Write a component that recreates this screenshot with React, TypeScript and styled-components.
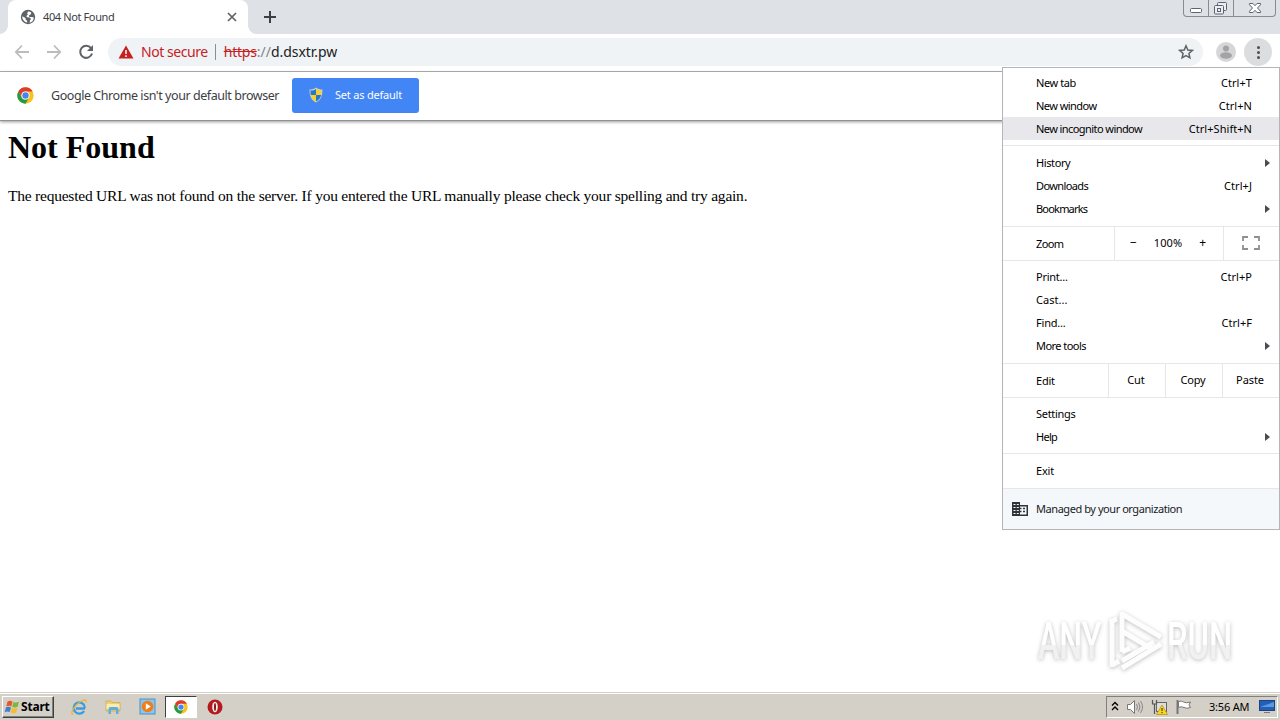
import React from "react";
import styled, { createGlobalStyle } from "styled-components";

const GlobalStyle = createGlobalStyle`
    * {
        box-sizing: border-box;
    }
    body {
        margin: 0;
        background: #fff;
        overflow: hidden;
    }
`

const Screen = styled.div`
    position: relative;
    display: flex;
    flex-direction: column;
    width: 1280px;
    height: 720px;
    overflow: hidden;
    background: #fff;
    font-family: "Noto Sans", "Open Sans", sans-serif;
    font-size: 11px;
    color: #000;
    white-space: nowrap;
`

/* text whose advance is tightened or widened */
const Label = styled.span<{ $gap?: number; $size?: number; $color?: string }>`
    font-size: ${(p) => p.$size ?? 11}px;
    letter-spacing: ${(p) => p.$gap ?? 0}px;
    color: ${(p) => p.$color ?? "inherit"};
`

const TabStrip = styled.div`
    display: flex;
    align-items: flex-start;
    height: 34px;
    flex: none;
    padding-left: 8px;
    background: #dee1e6;
`

const Tab = styled.div`
    position: relative;
    display: flex;
    align-items: center;
    width: 240px;
    height: 34px;
    padding: 0 10px 0 12px;
    background: #fff;
    border-radius: 8px 8px 0 0;
    color: #3c4043;

    /* flared feet of the tab */
    &::before,
    &::after {
        content: "";
        position: absolute;
        bottom: 0;
        width: 8px;
        height: 8px;
    }
    &::before {
        left: -8px;
        background: radial-gradient(circle at 0 0, #dee1e6 7.5px, #fff 8px);
    }
    &::after {
        right: -8px;
        background: radial-gradient(circle at 100% 0, #dee1e6 7.5px, #fff 8px);
    }

    svg {
        flex: none;
    }
    span {
        flex: 1;
        margin-left: 7px;
        padding-bottom: 2px;
    }
`

const NewTab = styled.div`
    padding: 10px 0 0 15px;
    line-height: 0;
`

const WindowButtons = styled.div`
    display: flex;
    width: 93px;
    height: 17px;
    margin-left: auto;
    margin-right: 4px;
    border: 1px solid #868b95;
    border-top: 0;
    border-radius: 0 0 4px 4px;
`

const WindowButton = styled.div<{ $width: number }>`
    display: flex;
    justify-content: center;
    width: ${(p) => p.$width}px;
    border-right: 1px solid #868b95;

    &:last-child {
        border-right: 0;
    }
`

const Toolbar = styled.div`
    display: flex;
    align-items: center;
    height: 38px;
    flex: none;
    padding: 0 8px 1px 14px;
    border-bottom: 1px solid #b0b2b5;
`

const NavIcons = styled.div`
    display: flex;
    gap: 16px;
    width: 94px;
`

const AddressBar = styled.div`
    display: flex;
    align-items: center;
    width: 1095px;
    height: 28px;
    padding: 0 9px 0 10px;
    border-radius: 14px;
    background: #f0f3f5;
    color: #202124;

    > span {
        padding-bottom: 1px;
    }
`

const SecurityText = styled(Label)`
    margin-left: 7px;
`

const Divider = styled.i`
    width: 1px;
    height: 16px;
    margin: 0 8px 0 7px;
    background: #8b8e92;
`

const Struck = styled(Label)`
    text-decoration: line-through;
`

const StarSlot = styled.div`
    margin-left: auto;
    line-height: 0;
`

const Avatar = styled.svg`
    margin-left: 13px;
`

const MenuButton = styled.div`
    display: flex;
    flex-direction: column;
    align-items: center;
    justify-content: center;
    gap: 2px;
    width: 28px;
    height: 28px;
    margin-left: 8px;
    border-radius: 50%;
    background: #dcdddf;

    i {
        width: 3px;
        height: 3px;
        border-radius: 50%;
        background: #4c4f53;
    }
`

const InfoBar = styled.div`
    display: flex;
    align-items: center;
    height: 49px;
    flex: none;
    padding: 0 0 2px 17px;
    border-bottom: 1px solid #909294;
    box-shadow: 0 1px 3px rgba(0, 0, 0, 0.4);
    color: #3c4043;

    > span {
        flex: none;
        width: 241px;
        margin-left: 17px;
    }
`

const DefaultButton = styled.div`
    display: flex;
    align-items: center;
    width: 127px;
    height: 35px;
    padding-left: 17px;
    gap: 12px;
    border-radius: 3px;
    background: #4285f4;
    color: #fff;

    span {
        padding-bottom: 1px;
    }
`

const Page = styled.main`
    flex: 1;
    padding: 8px;
    font-family: "Liberation Serif", "Times New Roman", serif;

    h1 {
        margin: 0;
        font-size: 32px;
        line-height: 36px;
        letter-spacing: 0;
    }
    p {
        margin: 22px 0 0;
        font-size: 15.5px;
        line-height: 18px;
        letter-spacing: -0.225px;
    }
`

const Menu = styled.div`
    position: absolute;
    top: 67px;
    left: 1002px;
    width: 278px;
    height: 463px;
    border: 1px solid #b4b5b7;
    background: #fff;
`

const Section = styled.div<{ $height: number; $top?: number }>`
    height: ${(p) => p.$height}px;
    padding-top: ${(p) => p.$top ?? 5}px;
    border-bottom: 1px solid #e6e7e9;
`

const Row = styled.div<{ $active?: boolean }>`
    display: flex;
    align-items: center;
    height: 23px;
    padding: 0 27px 0 33px;
    background: ${(p) => (p.$active ? "#e8e8ec" : "transparent")};

    span + span {
        margin-left: auto;
    }
`

const Arrow = styled.i`
    margin: 0 -18px 0 auto;
    border: 4px solid transparent;
    border-left: 5px solid #4a4c50;
    border-right: 0;
`

const SplitRow = styled.div`
    display: flex;
    height: 34px;
    border-bottom: 1px solid #e6e7e9;
`

const Cell = styled.div<{ $width: number }>`
    display: flex;
    align-items: center;
    justify-content: center;
    gap: 17px;
    width: ${(p) => p.$width}px;
    padding: 0 2px 2px 0;
    border-left: 1px solid #e6e7e9;

    &:first-child {
        justify-content: flex-start;
        padding: 0 0 0 33px;
        border-left: 0;
    }
`

const Managed = styled.div`
    display: flex;
    align-items: center;
    gap: 8px;
    height: 40px;
    padding-left: 9px;
    background: #f5f8fb;
    color: #202124;

    span {
        padding-bottom: 1px;
    }
`

const Watermark = styled.svg`
    position: absolute;
    left: 1030px;
    top: 604px;
    filter: drop-shadow(0 1px 2px rgba(0, 0, 0, 0.26));
`

const Taskbar = styled.div`
    display: flex;
    align-items: center;
    height: 28px;
    flex: none;
    padding: 1px 2px 1px 2px;
    border-top: 1px solid #d4d0c8;
    background: #d4d0c8;
    box-shadow: inset 0 1px 0 #fff;
`

const StartButton = styled.div`
    display: flex;
    align-items: center;
    width: 52px;
    height: 22px;
    padding-left: 1px;
    border: 1px solid;
    border-color: #fff #404040 #404040 #fff;
    box-shadow: inset -1px -1px 0 #808080;
    font-weight: 700;
`

const Task = styled.div<{ $width: number; $indent?: number; $pressed?: boolean }>`
    display: flex;
    align-items: center;
    justify-content: center;
    width: ${(p) => p.$width}px;
    height: 22px;
    padding-left: ${(p) => p.$indent ?? 0}px;
    border: 1px solid;
    border-color: ${(p) => (p.$pressed ? "#404040 #fff #fff #404040" : "transparent")};
    background: ${(p) => (p.$pressed ? "#fff" : "transparent")};

    svg {
        flex: none;
    }
`

const Tray = styled.div`
    display: flex;
    align-items: center;
    width: 172px;
    height: 22px;
    margin-left: auto;
    padding-left: 4px;
    border: 1px solid;
    border-color: #808080 #fff #fff #808080;

    svg {
        flex: none;
    }
    svg + svg {
        margin-left: 7px;
    }
    span {
        width: 50px;
        margin-left: 17px;
    }
`

const ChromeIcon = ({ size }: { size: number }) => (
    <svg width={size} height={size} viewBox="0 0 48 48">
        <circle cx="24" cy="24" r="23" fill="#fbc116" />
        <path d="M4 12.500A23 23 0 0 1 44 12.500H24A11.500 11.500 0 0 0 14 30z" fill="#df3a30" />
        <path d="M4 12.500A23 23 0 0 0 24 47L34 30A11.500 11.500 0 0 1 14 30z" fill="#259b4a" />
        <circle cx="24" cy="24" r="11.500" fill="#fff" />
        <circle cx="24" cy="24" r="9" fill="#4285f4" />
    </svg>
)

interface ItemProps {
    text: string;
    gap?: number;
    keys?: string;
    arrow?: boolean;
    active?: boolean;
}

const Item: React.FC<ItemProps> = ({ text, gap, keys, arrow, active }) => (
    <Row $active={active}>
        <Label $gap={gap ?? -0.4}>{text}</Label>
        {keys && <Label $gap={0.05}>{keys}</Label>}
        {arrow && <Arrow />}
    </Row>
)

const App: React.FC = () => {
    return (
        <Screen>
            <GlobalStyle />
            <TabStrip>
                <Tab>
                    <svg width="16" height="16" viewBox="0 0 16 16">
                        <circle cx="8" cy="8" r="7.200" fill="#5f6368" />
                        <path d="M8.500 2.200 7 4.300l1 1.200-1.700 1.600.8 1.200 2.600.2 1.300 1.500-1 1.300-.4 2.500c2.500-.5 4.200-2.700 4.200-5.300l-2.200-.6-2.200.2-.7-1.500 2-1.200.6-2zM2.200 7.300c0 3 1.900 5.700 5 6.300V12L5.600 10.600 5.500 9z" fill="#fff" />
                    </svg>
                    <Label $gap={-0.38}>404 Not Found</Label>
                    <svg width="12" height="12" viewBox="0 0 12 12">
                        <path d="M2 2l8 8M10 2l-8 8" stroke="#5f6368" strokeWidth="1.700" />
                    </svg>
                </Tab>
                <NewTab>
                    <svg width="14" height="14" viewBox="0 0 14 14">
                        <path d="M7 1v12M1 7h12" stroke="#3c4043" strokeWidth="2" />
                    </svg>
                </NewTab>
                <WindowButtons>
                    <WindowButton $width={25}>
                        <svg width="24" height="16">
                            <rect x="6.500" y="8.500" width="11" height="4" rx="1" fill="#fff" stroke="#5d6370" />
                        </svg>
                    </WindowButton>
                    <WindowButton $width={25}>
                        <svg width="24" height="16" fill="#eceef1" stroke="#5d6370">
                            <rect x="8.500" y="2.500" width="9" height="8" rx="1" />
                            <rect x="5.500" y="5.500" width="9" height="8.500" rx="1" />
                            <rect x="8.500" y="8.500" width="3" height="3" />
                        </svg>
                    </WindowButton>
                    <WindowButton $width={41}>
                        <svg width="40" height="16">
                            <path d="M14.500 3.500h3.500l2 2.200 2-2.200h3.500v1.200L22.500 8l3 3.300v1.200H22l-2-2.200-2 2.200h-3.500v-1.200l3-3.300-3-3.300z" fill="#fff" stroke="#5d6370" />
                        </svg>
                    </WindowButton>
                </WindowButtons>
            </TabStrip>

            <Toolbar>
                <NavIcons>
                    <svg width="16" height="16" viewBox="0 0 16 16" fill="none" stroke="#babcbe" strokeWidth="1.800">
                        <path d="M15 8H2M8 1.500 1.800 8 8 14.500" />
                    </svg>
                    <svg width="16" height="16" viewBox="0 0 16 16" fill="none" stroke="#babcbe" strokeWidth="1.800">
                        <path d="M1 8h13M8 1.500 14.200 8 8 14.500" />
                    </svg>
                    <svg width="16" height="16" viewBox="0 0 16 16">
                        <path d="M13 4.200A6 6 0 1 0 14 9.500" fill="none" stroke="#5f6368" strokeWidth="2" />
                        <path d="M15 1v6H9z" fill="#5f6368" />
                    </svg>
                </NavIcons>
                <AddressBar>
                    <svg width="16" height="14" viewBox="0 0 16 14">
                        <path d="M8 .5 15.500 13.500H.5z" fill="#c5221f" />
                        <path d="M8 5v4M8 10.300v1.700" stroke="#fff" strokeWidth="1.500" />
                    </svg>
                    <SecurityText $size={14} $gap={-0.45} $color="#c5221f">Not secure</SecurityText>
                    <Divider />
                    <Struck $size={14} $gap={-0.2} $color="#c5221f">https</Struck>
                    <Label $size={14} $color="#80868b">://</Label>
                    <Label $size={14} $gap={-0.05}>d.dsxtr.pw</Label>
                    <StarSlot>
                        <svg width="16" height="16" viewBox="0 0 16 16">
                            <path d="M8 1.800 9.800 6l4.500.4-3.400 3 1 4.400L8 11.500l-3.900 2.300 1-4.400-3.400-3L6.200 6z" fill="none" stroke="#5f6368" strokeWidth="1.500" />
                        </svg>
                    </StarSlot>
                </AddressBar>
                <Avatar width="20" height="20" viewBox="0 0 20 20">
                    <circle cx="10" cy="10" r="10" fill="#d6d6d7" />
                    <circle cx="10" cy="6.500" r="3" fill="#a2a3a5" />
                    <ellipse cx="10" cy="13.500" rx="6" ry="3.200" fill="#a2a3a5" />
                </Avatar>
                <MenuButton>
                    <i />
                    <i />
                    <i />
                </MenuButton>
            </Toolbar>

            <InfoBar>
                <ChromeIcon size={17} />
                <Label $size={12.5} $gap={-0.44}>Google Chrome isn't your default browser</Label>
                <DefaultButton>
                    <svg width="14" height="16" viewBox="0 0 14 16">
                        <path d="M7 .5C9 2 11 2.500 13.500 2.500 13.500 9 12 13 7 15.500 2 13 .5 9 .5 2.500 3 2.500 5 2 7 .5z" fill="#c9d0c4" />
                        <path d="M7 2v6H1.800C1.500 6.500 1.500 5 1.500 3.500 4 3.500 5.500 3 7 2zM7 8h5.200C11.500 11 10 13 7 14.500z" fill="#2878c8" />
                        <path d="M7 2c1.500 1 3 1.500 5.500 1.500 0 1.500 0 3-.3 4.500H7zM7 8v6.500C4 13 2.500 11 1.800 8z" fill="#f8d02e" />
                    </svg>
                    <Label $gap={-0.21}>Set as default</Label>
                </DefaultButton>
            </InfoBar>

            <Page>
                <h1>Not Found</h1>
                <p>The requested URL was not found on the server. If you entered the URL manually please check your spelling and try again.</p>
            </Page>

            <Taskbar>
                <StartButton>
                    <svg width="17" height="16" viewBox="0 0 16 16">
                        <path d="M3 2.500c2-1 3.500-.8 5 .1L6.800 7.500c-1.500-.9-3-.9-5-.1z" fill="#e8572a" />
                        <path d="M8.800 3c1.700.8 3.300.8 5.700-.2l-1.300 5c-2 .8-3.700.8-5.500 0z" fill="#7cb83c" />
                        <path d="M1.500 8.300c2-.8 3.500-.8 5 .1l-1.300 4.700c-1.500-.9-3-.9-5-.1z" fill="#3d7fd0" />
                        <path d="M7.400 8.800c1.700.8 3.300.8 5.600 0l-1.400 4.800c-2 .8-3.700.7-5.500-.2z" fill="#f5bd2b" />
                    </svg>
                    <Label $size={12} $gap={-0.2}>Start</Label>
                </StartButton>
                <Task $width={50}>
                    <svg width="18" height="18" viewBox="0 0 18 18">
                        <path d="M15 10.500H5.800M14 13c-1 1.700-2.700 2.600-4.600 2.600A5.600 5.600 0 0 1 3.700 10C3.700 7 6 4.500 9.300 4.500c3.200 0 5.500 2.300 5.500 5.800" fill="none" stroke="#3d9be0" strokeWidth="2.300" />
                        <path d="M3 16.500C-.5 16 4 8 10 4c4-2.700 7-3 6 .5" fill="none" stroke="#e6b736" strokeWidth="1.300" />
                    </svg>
                </Task>
                <Task $width={17} $indent={1}>
                    <svg width="17" height="17" viewBox="0 0 17 17">
                        <path d="M1 3h5l1 1.500h8V13H1z" fill="#efcf70" stroke="#c7a64a" strokeWidth=".7" />
                        <path d="M1.500 6h13v5h-13z" fill="#faecae" />
                        <path d="M3.500 16v-5q0-2 2-2h6q2 0 2 2v5H11v-4H6v4z" fill="#61aedb" />
                    </svg>
                </Task>
                <Task $width={44} $indent={8}>
                    <svg width="17" height="17" viewBox="0 0 17 17">
                        <rect x="1" y="1" width="15" height="15" fill="#8fc3e8" stroke="#4593cf" />
                        <circle cx="8.500" cy="8.500" r="5.800" fill="#f07e17" />
                        <path d="m6.800 5.300 5 3.200-5 3.200z" fill="#fff" />
                    </svg>
                </Task>
                <Task $width={32} $pressed>
                    <ChromeIcon size={14} />
                </Task>
                <Task $width={35}>
                    <svg width="16" height="16" viewBox="0 0 16 16">
                        <circle cx="8" cy="8" r="7.500" fill="#b3191d" />
                        <ellipse cx="8" cy="8" rx="2.800" ry="5.200" fill="#f7efee" />
                        <ellipse cx="8" cy="8" rx="1" ry="4" fill="#8a1114" />
                    </svg>
                </Task>
                <Tray>
                    <svg width="8" height="12" viewBox="0 0 8 12" fill="none" stroke="#000" strokeWidth="1.400">
                        <path d="M1 4.500l3-3 3 3M1 9l3-3 3 3" />
                    </svg>
                    <svg width="18" height="16" viewBox="0 0 18 16">
                        <path d="M1.500 5.500h3l4-4v13l-4-4h-3z" fill="#fff" stroke="#777" />
                        <path d="M10.500 5q2 3 0 6M12.500 3.500q3 4.500 0 9M14.500 2q4 6 0 12" fill="none" stroke="#888" />
                    </svg>
                    <svg width="17" height="16" viewBox="0 0 17 16">
                        <rect x="5.500" y="3.500" width="10" height="9" fill="#ddd" stroke="#666" />
                        <path d="M1.500 1v4h4V1M3.500 5v10" fill="none" stroke="#555" strokeWidth="1.200" />
                        <path d="m11 6 5.500 9.500h-11z" fill="#ffd51c" stroke="#b09200" strokeWidth=".7" />
                        <path d="M11 9v3M11 13v1.200" stroke="#222" />
                    </svg>
                    <svg width="17" height="16" viewBox="0 0 17 16">
                        <path d="M2.500 1v14" stroke="#777" strokeWidth="2" />
                        <path d="M3.500 2.500q3-1 5 .5t7 0q-3 3 0 5.500-4 1.500-6.500 0t-5.500 0z" fill="#fff" stroke="#777" />
                    </svg>
                    <Label $gap={-0.2}>3:56 AM</Label>
                    <svg width="16" height="15" viewBox="0 0 16 15">
                        <rect x=".5" y="1.500" width="15" height="10" fill="#235fb8" stroke="#174584" />
                        <path d="M1 8 15 3v5z" fill="#5a99dc" />
                        <path d="M5 13.500h6" stroke="#777" />
                    </svg>
                </Tray>
            </Taskbar>

            <Menu>
                <Section $height={78} $top={3}>
                    <Item text="New tab" keys="Ctrl+T" />
                    <Item text="New window" gap={-0.55} keys="Ctrl+N" />
                    <Item text="New incognito window" gap={-0.57} keys="Ctrl+Shift+N" active />
                </Section>
                <Section $height={81}>
                    <Item text="History" arrow />
                    <Item text="Downloads" gap={-0.6} keys="Ctrl+J" />
                    <Item text="Bookmarks" gap={-0.8} arrow />
                </Section>
                <SplitRow>
                    <Cell $width={111}><Label $gap={-0.6}>Zoom</Label></Cell>
                    <Cell $width={109}>
                        <Label $size={12}>−</Label>
                        <Label $gap={0.1}>100%</Label>
                        <Label $size={12}>+</Label>
                    </Cell>
                    <Cell $width={56}>
                        <svg width="18" height="14" viewBox="0 0 18 14">
                            <path d="M1 5V1h5M12 1h5v4M17 9v4h-5M6 13H1V9" fill="none" stroke="#8d8f92" strokeWidth="1.800" />
                        </svg>
                    </Cell>
                </SplitRow>
                <Section $height={103} $top={4}>
                    <Item text="Print..." gap={-0.25} keys="Ctrl+P" />
                    <Item text="Cast..." gap={0.05} />
                    <Item text="Find..." gap={-0.2} keys="Ctrl+F" />
                    <Item text="More tools" gap={-0.55} arrow />
                </Section>
                <SplitRow>
                    <Cell $width={105}><Label $gap={-0.2}>Edit</Label></Cell>
                    <Cell $width={57}><Label>Cut</Label></Cell>
                    <Cell $width={57}><Label $gap={-0.2}>Copy</Label></Cell>
                    <Cell $width={57}><Label $gap={-0.1}>Paste</Label></Cell>
                </SplitRow>
                <Section $height={56} $top={4}>
                    <Item text="Settings" gap={-0.3} />
                    <Item text="Help" gap={-0.7} arrow />
                </Section>
                <Section $height={35}>
                    <Item text="Exit" gap={-0.2} />
                </Section>
                <Managed>
                    <svg width="16" height="14" viewBox="0 0 16 14">
                        <path d="M0 0h8v3h8v11H0z" fill="#303338" />
                        <path d="M1.500 2.500h2M4.800 2.500h2M1.500 5.500h2M4.800 5.500h2M1.500 8.500h2M4.800 8.500h2M1.500 11.500h2M4.800 11.500h2" stroke="#f5f8fb" />
                        <path d="M8 4.500h6.500v8H8z" fill="#f5f8fb" />
                        <path d="M8 6.500h1.500M11 6.500h2M8 9.500h1.500M11 9.500h2" stroke="#303338" strokeWidth="1.500" />
                    </svg>
                    <Label $gap={-0.44}>Managed by your organization</Label>
                </Managed>
            </Menu>

            <Watermark width="240" height="84" viewBox="0 0 240 84">
                <defs>
                    <linearGradient id="fade" x1="0" y1="0" x2="0" y2="1">
                        <stop offset="0.55" stopColor="#fff" />
                        <stop offset="0.56" stopColor="#f1f1f1" />
                    </linearGradient>
                </defs>
                <g fill="url(#fade)" fontFamily="Roboto, sans-serif" fontSize="52" fontWeight="500">
                    <text transform="translate(8 55) scale(0.62 1)">ANY</text>
                    <text transform="translate(137 55) scale(0.63 1)">RUN</text>
                </g>
                <g fill="none" stroke="#fdfdfd" strokeWidth="5" strokeLinejoin="round">
                    <path d="M92 48V10l39 23M92 27l30 18M92 48l8-4" />
                    <path d="M82 15v48M92 64l39-24M92 57l32-19" />
                    <path d="M82 17l5-2M82 61l7-4" />
                </g>
            </Watermark>
        </Screen>
    );
};
export default App;
